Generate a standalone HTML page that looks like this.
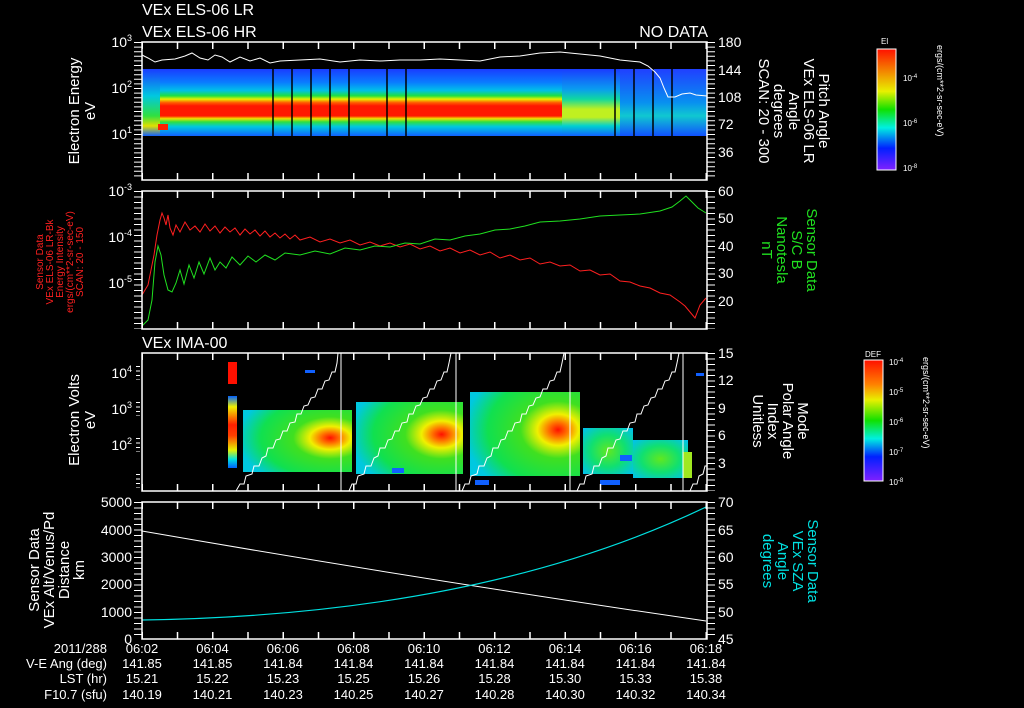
<!DOCTYPE html>
<html><head><meta charset="utf-8"><style>
html,body{margin:0;padding:0;background:#000;width:1024px;height:708px;overflow:hidden}
svg{display:block}
text{font-family:"Liberation Sans",sans-serif;fill:#fff}
</style></head><body>
<svg width="1024" height="708" viewBox="0 0 1024 708" xmlns="http://www.w3.org/2000/svg">
<defs>
<linearGradient id="gA" x1="0" y1="0" x2="0" y2="1">
<stop offset="0" stop-color="#1a3cff"/><stop offset="0.2" stop-color="#0a7cff"/><stop offset="0.32" stop-color="#00c0e8"/><stop offset="0.4" stop-color="#20e040"/><stop offset="0.45" stop-color="#e8f000"/><stop offset="0.5" stop-color="#ff6000"/><stop offset="0.55" stop-color="#ff1800"/><stop offset="0.7" stop-color="#ff1800"/><stop offset="0.74" stop-color="#f0e000"/><stop offset="0.79" stop-color="#30e040"/><stop offset="0.86" stop-color="#00c8e0"/><stop offset="1" stop-color="#1060ff"/></linearGradient>
<linearGradient id="gB" x1="0" y1="0" x2="0" y2="1">
<stop offset="0" stop-color="#1a3cff"/><stop offset="0.3" stop-color="#0a9cf0"/><stop offset="0.45" stop-color="#10d8a0"/><stop offset="0.6" stop-color="#c0f020"/><stop offset="0.72" stop-color="#c0f020"/><stop offset="0.85" stop-color="#00d0d0"/><stop offset="1" stop-color="#1060ff"/></linearGradient>
<linearGradient id="gC" x1="0" y1="0" x2="0" y2="1">
<stop offset="0" stop-color="#2040ff"/><stop offset="0.5" stop-color="#0890f0"/><stop offset="0.7" stop-color="#10c8d0"/><stop offset="1" stop-color="#1050ff"/></linearGradient>
<linearGradient id="gL" x1="0" y1="0" x2="0" y2="1">
<stop offset="0" stop-color="#1a3cff"/><stop offset="0.4" stop-color="#00c8e0"/><stop offset="0.7" stop-color="#30e040"/><stop offset="0.85" stop-color="#e0e000"/><stop offset="1" stop-color="#1060ff"/></linearGradient>
<radialGradient id="rB" cx="0.8" cy="0.45" r="0.85">
<stop offset="0" stop-color="#ff1000"/><stop offset="0.1" stop-color="#ff7000"/><stop offset="0.22" stop-color="#f0f000"/><stop offset="0.4" stop-color="#40e020"/><stop offset="0.75" stop-color="#10e050"/><stop offset="1" stop-color="#00c8e0"/></radialGradient>
<radialGradient id="rW" cx="0.5" cy="0.5" r="0.7">
<stop offset="0" stop-color="#60e820"/><stop offset="0.5" stop-color="#10e070"/><stop offset="1" stop-color="#00c0f0"/></radialGradient>
<linearGradient id="gCol" x1="0" y1="0" x2="0" y2="1">
<stop offset="0" stop-color="#ff1000"/><stop offset="0.2" stop-color="#ff8000"/><stop offset="0.33" stop-color="#e8f000"/><stop offset="0.5" stop-color="#10e000"/><stop offset="0.65" stop-color="#00f0e0"/><stop offset="0.8" stop-color="#0020ff"/><stop offset="1" stop-color="#8020ff"/></linearGradient>
<linearGradient id="gCol1" x1="0" y1="0" x2="0" y2="1">
<stop offset="0" stop-color="#ff1000"/><stop offset="0.35" stop-color="#e8f000"/><stop offset="0.5" stop-color="#10e000"/><stop offset="0.65" stop-color="#00f0e0"/><stop offset="0.82" stop-color="#0020ff"/><stop offset="1" stop-color="#8020ff"/></linearGradient>
<linearGradient id="gRedCol" x1="0" y1="0" x2="0" y2="1">
<stop offset="0" stop-color="#0060ff"/><stop offset="0.15" stop-color="#f0f000"/><stop offset="0.4" stop-color="#ff2000"/><stop offset="0.55" stop-color="#ff4000"/><stop offset="0.75" stop-color="#e8f000"/><stop offset="0.88" stop-color="#00e0e0"/><stop offset="1" stop-color="#0060ff"/></linearGradient>
</defs>

<text x="142" y="15" font-size="16">VEx ELS-06 LR</text>
<text x="142" y="37" font-size="16">VEx ELS-06 HR</text>
<text x="708" y="37" font-size="16" text-anchor="end">NO DATA</text>

<!-- PANEL 1 -->
<rect x="142" y="69" width="420" height="67" fill="url(#gA)"/>
<rect x="142" y="69" width="18" height="67" fill="url(#gL)"/>
<rect x="562" y="69" width="58" height="67" fill="url(#gB)"/>
<rect x="620" y="69" width="87" height="67" fill="url(#gC)"/>
<rect x="158" y="124" width="10" height="6" fill="#ff2000"/>
<g stroke="#000" stroke-width="1.5">
<line x1="273" y1="69" x2="273" y2="136"/><line x1="292" y1="69" x2="292" y2="136"/><line x1="311" y1="69" x2="311" y2="136"/><line x1="330" y1="69" x2="330" y2="136"/><line x1="349" y1="69" x2="349" y2="136"/><line x1="387" y1="69" x2="387" y2="136"/><line x1="406" y1="69" x2="406" y2="136"/><line x1="615" y1="69" x2="615" y2="136"/><line x1="634" y1="69" x2="634" y2="136"/><line x1="653" y1="69" x2="653" y2="136"/><line x1="672" y1="69" x2="672" y2="136"/>
</g>
<polyline fill="none" stroke="#fff" stroke-width="1" points="142,55 148,58 155,62 162,60 175,59 185,56 192,53 200,58 208,60 215,55 222,57 230,62 240,57 250,61 260,58 270,63 280,61 300,60 320,59 340,62 360,60 380,61 400,60 420,60 440,59 460,60 480,61 500,57 520,56 540,53 560,52 580,54 600,56 620,60 640,62 648,66 655,72 660,78 664,88 668,97 675,97 682,94 690,93 696,95 707,96"/>
<rect x="142" y="42" width="565" height="138" fill="none" stroke="#fff" stroke-width="1.5"/>
<g stroke="#fff" stroke-width="7" stroke-dasharray="1.5 33.75">
<line x1="141.5" y1="45.5" x2="707" y2="45.5"/><line x1="141.5" y1="176.5" x2="707" y2="176.5"/></g>
<g stroke="#fff" stroke-width="8" stroke-dasharray="1 3.6">
<line x1="138" y1="42" x2="138" y2="180"/><line x1="711" y1="42" x2="711" y2="180"/></g>
<g font-size="14" text-anchor="end">
<text x="132" y="47">10<tspan font-size="9" dy="-6">3</tspan></text>
<text x="132" y="93">10<tspan font-size="9" dy="-6">2</tspan></text>
<text x="132" y="139">10<tspan font-size="9" dy="-6">1</tspan></text></g>
<g font-size="14">
<text x="718" y="47">180</text><text x="718" y="75">144</text><text x="718" y="102">108</text><text x="718" y="129">72</text><text x="718" y="157">36</text></g>
<g font-size="15" text-anchor="middle" transform="translate(84,111) rotate(-90)"><text x="0" y="-5">Electron Energy</text><text x="0" y="11">eV</text></g>
<g font-size="15" text-anchor="middle" transform="translate(793,111) rotate(90)">
<text x="0" y="-26">Pitch Angle</text><text x="0" y="-11">VEx ELS-06 LR</text><text x="0" y="4">Angle</text><text x="0" y="19">degrees</text><text x="0" y="34">SCAN: 20 - 300</text></g>
<rect x="877" y="49" width="19" height="121" fill="url(#gCol1)" stroke="#fff" stroke-width="1"/>
<text x="881" y="44" font-size="8">El</text>
<g font-size="8"><text x="903" y="81">10<tspan font-size="6" dy="-3">-4</tspan></text><text x="903" y="126">10<tspan font-size="6" dy="-3">-6</tspan></text><text x="903" y="171">10<tspan font-size="6" dy="-3">-8</tspan></text></g>
<text font-size="9" transform="translate(937,45) rotate(90)">ergs/(cm**2-sr-sec-eV)</text>

<!-- PANEL 2 -->
<polyline fill="none" stroke="#ff2020" stroke-width="1" points="142,295 145,290 148,285 151,270 154,255 157,235 160,220 162,213 164,218 166,225 168,215 170,228 173,235 176,225 180,232 185,222 190,230 195,226 200,232 205,224 210,231 215,226 220,233 225,227 230,232 235,228 240,235 245,229 250,234 255,230 260,236 265,231 270,237 275,233 280,238 285,234 290,239 295,235 300,240 310,237 320,242 330,239 340,243 350,240 360,245 370,242 380,246 390,243 400,247 410,244 420,249 430,246 440,251 450,248 460,253 470,250 480,255 490,252 500,258 510,255 520,260 530,258 540,264 550,262 560,266 570,265 580,271 590,270 600,275 610,274 620,281 630,282 640,286 650,288 660,293 670,295 680,302 685,306 690,312 695,318 700,305 706,298"/>
<polyline fill="none" stroke="#20e020" stroke-width="1" points="142,326 148,320 152,300 155,262 158,246 161,255 164,275 168,290 172,292 176,283 180,270 184,284 189,265 194,278 199,262 204,274 210,258 215,270 220,262 226,268 232,257 240,265 248,256 256,262 265,255 275,260 285,253 300,255 315,251 330,254 345,248 360,250 375,246 390,247 405,243 420,244 435,239 450,240 465,236 480,234 495,230 510,229 525,226 540,222 560,221 580,219 600,216 620,215 640,214 660,211 672,207 680,201 686,196 692,202 698,208 706,213"/>
<rect x="142" y="191" width="565" height="138" fill="none" stroke="#fff" stroke-width="1.5"/>
<g stroke="#fff" stroke-width="7" stroke-dasharray="1.5 33.75">
<line x1="141.5" y1="194.5" x2="707" y2="194.5"/><line x1="141.5" y1="325.5" x2="707" y2="325.5"/></g>
<g stroke="#fff" stroke-width="8" stroke-dasharray="1 4.5">
<line x1="138" y1="191" x2="138" y2="329"/><line x1="711" y1="191" x2="711" y2="329"/></g>
<g font-size="14" text-anchor="end">
<text x="132" y="196">10<tspan font-size="9" dy="-6">-3</tspan></text>
<text x="132" y="242">10<tspan font-size="9" dy="-6">-4</tspan></text>
<text x="132" y="288">10<tspan font-size="9" dy="-6">-5</tspan></text></g>
<g font-size="14"><text x="718" y="196">60</text><text x="718" y="223">50</text><text x="718" y="251">40</text><text x="718" y="278">30</text><text x="718" y="306">20</text></g>
<g font-size="10" text-anchor="middle" transform="translate(60,262) rotate(-90)">
<text x="0" y="-17" fill="#ff2020" style="fill:#ff2020">Sensor Data</text><text x="0" y="-7" style="fill:#ff2020">VEx ELS-06 LR-Bk</text><text x="0" y="3" style="fill:#ff2020">Energy Intensity</text><text x="0" y="13" style="fill:#ff2020">ergs/(cm**2-sr-sec-eV)</text><text x="0" y="23" style="fill:#ff2020">SCAN: 20 - 150</text></g>
<g font-size="15" text-anchor="middle" transform="translate(788,250) rotate(90)">
<text x="0" y="-19" style="fill:#20e020">Sensor Data</text><text x="0" y="-4" style="fill:#20e020">S/C B</text><text x="0" y="11" style="fill:#20e020">Nanotesla</text><text x="0" y="26" style="fill:#20e020">nT</text></g>

<!-- PANEL 3 -->
<text x="142" y="348" font-size="16">VEx IMA-00</text>
<rect x="228" y="362" width="9" height="22" fill="#ff1000"/>
<rect x="228" y="396" width="9" height="72" fill="url(#gRedCol)"/>
<rect x="243" y="410" width="109" height="62" fill="url(#rB)"/>
<rect x="356" y="402" width="107" height="72" fill="url(#rB)"/>
<rect x="470" y="392" width="110" height="84" fill="url(#rB)"/>
<rect x="583" y="428" width="50" height="46" fill="url(#rW)"/>
<rect x="633" y="440" width="55" height="38" fill="url(#rW)"/>
<rect x="683" y="452" width="9" height="26" fill="#a0e820"/>
<g fill="#1060ff"><rect x="305" y="370" width="10" height="3"/><rect x="392" y="468" width="12" height="5"/><rect x="620" y="455" width="12" height="6"/><rect x="600" y="480" width="20" height="5"/><rect x="696" y="373" width="8" height="3"/><rect x="475" y="480" width="14" height="5"/></g>
<g fill="none" stroke="#fff" stroke-width="1">
<polyline points="236,491 240,484 244,484 246,476 252,474 254,466 259,466 262,458 266,456 268,448 273,448 276,440 280,439 283,431 287,431 290,423 295,422 297,414 301,414 304,406 308,405 311,398 315,397 318,389 322,389 325,381 329,380 332,372 335,372 337,363 338,353"/>
<line x1="341" y1="353" x2="341" y2="491"/>
<polyline points="349,491 352,484 356,484 358,476 364,474 366,466 371,466 374,458 378,456 380,448 385,448 388,440 392,439 395,431 399,431 402,423 407,422 409,414 413,414 416,406 420,405 423,398 427,397 430,389 434,389 437,381 441,380 444,372 447,372 449,363 451,353"/>
<line x1="456" y1="353" x2="456" y2="491"/>
<polyline points="462,491 465,484 469,484 471,476 477,474 479,466 484,466 487,458 491,456 493,448 498,448 501,440 505,439 508,431 512,431 515,423 520,422 522,414 526,414 529,406 533,405 536,398 540,397 543,389 547,389 550,381 554,380 557,372 560,372 562,363 564,353"/>
<line x1="570" y1="353" x2="570" y2="491"/>
<polyline points="577,491 580,484 584,484 586,476 592,474 594,466 599,466 602,458 606,456 608,448 613,448 616,440 620,439 623,431 627,431 630,423 635,422 637,414 641,414 644,406 648,405 651,398 655,397 658,389 662,389 665,381 669,380 672,372 675,372 677,363 679,353"/>
<line x1="683" y1="353" x2="683" y2="491"/>
<polyline points="690,491 693,484 697,484 699,476 703,474 705,466 707,466"/>
</g>
<rect x="142" y="353" width="565" height="138" fill="none" stroke="#fff" stroke-width="1.5"/>
<g stroke="#fff" stroke-width="7" stroke-dasharray="1.5 33.75">
<line x1="141.5" y1="356.5" x2="707" y2="356.5"/><line x1="141.5" y1="487.5" x2="707" y2="487.5"/></g>
<g stroke="#fff" stroke-width="4" stroke-dasharray="1 3.5">
<line x1="138" y1="366" x2="138" y2="380"/><line x1="138" y1="402" x2="138" y2="416"/><line x1="138" y1="438" x2="138" y2="452"/><line x1="138" y1="474" x2="138" y2="488"/></g>
<g stroke="#fff" stroke-width="8" stroke-dasharray="1 4.5"><line x1="711" y1="353" x2="711" y2="491"/></g>
<g font-size="14" text-anchor="end">
<text x="132" y="378">10<tspan font-size="9" dy="-6">4</tspan></text>
<text x="132" y="414">10<tspan font-size="9" dy="-6">3</tspan></text>
<text x="132" y="450">10<tspan font-size="9" dy="-6">2</tspan></text></g>
<g font-size="14"><text x="718" y="358">15</text><text x="718" y="385">12</text><text x="718" y="413">9</text><text x="718" y="440">6</text><text x="718" y="468">3</text></g>
<g font-size="15" text-anchor="middle" transform="translate(84,420) rotate(-90)"><text x="0" y="-5">Electron Volts</text><text x="0" y="11">eV</text></g>
<g font-size="15" text-anchor="middle" transform="translate(779,421) rotate(90)">
<text x="0" y="-19">Mode</text><text x="0" y="-4">Polar Angle</text><text x="0" y="11">Index</text><text x="0" y="26">Unitless</text></g>
<rect x="864" y="360" width="19" height="121" fill="url(#gCol)" stroke="#fff" stroke-width="1"/>
<text x="865" y="357" font-size="8">DEF</text>
<g font-size="8"><text x="889" y="365">10<tspan font-size="6" dy="-3">-4</tspan></text><text x="889" y="395">10<tspan font-size="6" dy="-3">-5</tspan></text><text x="889" y="425">10<tspan font-size="6" dy="-3">-6</tspan></text><text x="889" y="455">10<tspan font-size="6" dy="-3">-7</tspan></text><text x="889" y="485">10<tspan font-size="6" dy="-3">-8</tspan></text></g>
<text font-size="9" transform="translate(923,357) rotate(90)">ergs/(cm**2-sr-sec-eV)</text>

<!-- PANEL 4 -->
<path d="M142 531 Q424 580 706 621" fill="none" stroke="#fff" stroke-width="1"/>
<path d="M142 620 Q480 615 706 507" fill="none" stroke="#00e0e0" stroke-width="1.2"/>
<rect x="142" y="502" width="565" height="137" fill="none" stroke="#fff" stroke-width="1.5"/>
<g stroke="#fff" stroke-width="7" stroke-dasharray="1.5 33.75">
<line x1="141.5" y1="505.5" x2="707" y2="505.5"/><line x1="141.5" y1="635.5" x2="707" y2="635.5"/></g>
<g stroke="#fff" stroke-width="8" stroke-dasharray="1 4.5">
<line x1="138" y1="502" x2="138" y2="639"/><line x1="711" y1="502" x2="711" y2="639"/></g>
<g font-size="14" text-anchor="end">
<text x="132" y="507">5000</text><text x="132" y="535">4000</text><text x="132" y="562">3000</text><text x="132" y="589">2000</text><text x="132" y="617">1000</text><text x="132" y="644">0</text></g>
<g font-size="14"><text x="718" y="507">70</text><text x="718" y="535">65</text><text x="718" y="562">60</text><text x="718" y="589">55</text><text x="718" y="617">50</text><text x="718" y="644">45</text></g>
<g font-size="15" text-anchor="middle" transform="translate(57,570) rotate(-90)">
<text x="0" y="-18">Sensor Data</text><text x="0" y="-3">VEx Alt/Venus/Pd</text><text x="0" y="12">Distance</text><text x="0" y="27">km</text></g>
<g font-size="15" text-anchor="middle" transform="translate(789,561) rotate(90)">
<text x="0" y="-19" style="fill:#00e0e0">Sensor Data</text><text x="0" y="-4" style="fill:#00e0e0">VEx SZA</text><text x="0" y="11" style="fill:#00e0e0">Angle</text><text x="0" y="26" style="fill:#00e0e0">degrees</text></g>

<g font-size="13" text-anchor="end">
<text x="107" y="653">2011/288</text><text x="107" y="668">V-E Ang (deg)</text><text x="107" y="683">LST (hr)</text><text x="107" y="699">F10.7 (sfu)</text></g>
<g font-size="13" text-anchor="middle">
<text x="142" y="653">06:02</text><text x="212.5" y="653">06:04</text><text x="283" y="653">06:06</text><text x="353.5" y="653">06:08</text><text x="424" y="653">06:10</text><text x="494.5" y="653">06:12</text><text x="565" y="653">06:14</text><text x="635.5" y="653">06:16</text><text x="706" y="653">06:18</text>
<text x="142" y="668">141.85</text><text x="212.5" y="668">141.85</text><text x="283" y="668">141.84</text><text x="353.5" y="668">141.84</text><text x="424" y="668">141.84</text><text x="494.5" y="668">141.84</text><text x="565" y="668">141.84</text><text x="635.5" y="668">141.84</text><text x="706" y="668">141.84</text>
<text x="142" y="683">15.21</text><text x="212.5" y="683">15.22</text><text x="283" y="683">15.23</text><text x="353.5" y="683">15.25</text><text x="424" y="683">15.26</text><text x="494.5" y="683">15.28</text><text x="565" y="683">15.30</text><text x="635.5" y="683">15.33</text><text x="706" y="683">15.38</text>
<text x="142" y="699">140.19</text><text x="212.5" y="699">140.21</text><text x="283" y="699">140.23</text><text x="353.5" y="699">140.25</text><text x="424" y="699">140.27</text><text x="494.5" y="699">140.28</text><text x="565" y="699">140.30</text><text x="635.5" y="699">140.32</text><text x="706" y="699">140.34</text></g>
</svg>
</body></html>
